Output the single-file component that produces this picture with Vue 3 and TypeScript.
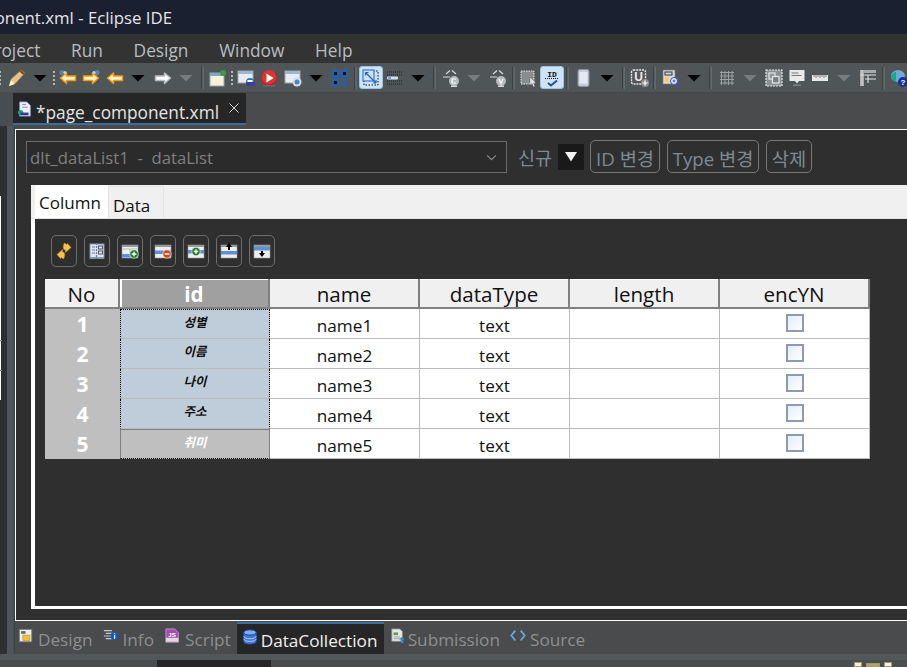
<script setup lang="ts">
interface TbItem { k: string; x: number }

const arrow = (d: string, fill: string, stroke: string) =>
  `<path d="${d}" fill="${fill}" stroke="${stroke}" stroke-width="1.5" stroke-linejoin="round"/>`
const LEFT = 'M1.5 9 7.5 4V7H16.5V11.5H7.5V14.5Z'
const RIGHT = 'M16.5 9 10.5 4V7H1.5V11.5H10.5V14.5Z'
const win = '<rect x="1" y="2" width="15" height="12" fill="#e8edf2" stroke="#9aa6b0"/><rect x="1" y="2" width="15" height="3" fill="#9fb6cf"/>'
const tableBase = '<rect x="1" y="3" width="16" height="13" fill="#eee" stroke="#999" stroke-width=".6"/><rect x="1" y="3" width="16" height="2" fill="#999"/>'

const icons: Record<string, string> = {
  dd: '<path d="M2.5 6H15.5L9 12.5Z" fill="#000"/>',
  ddoff: '<path d="M2.5 6H15.5L9 12.5Z" fill="#777c7e"/>',
  grip: '<path d="M9 2v14" stroke="#b5b8ba" stroke-width="2" stroke-dasharray="2 2"/>',
  sep: '<path d="M9 -2v22" stroke="#2b2e30" stroke-width="1"/><path d="M10 -2v22" stroke="#7a7f81" stroke-width="1"/>',
  pencil: '<path d="M1 17 3 10 13 1 17 4 8 14Z" fill="#e4c48c" stroke="#8a6a3c" stroke-width=".7"/><path d="M1 17 3 11 7 15Z" fill="#fff6c8"/><path d="M12 2 16 5" stroke="#6c4a20" stroke-width="2"/>',
  navb: arrow(LEFT, '#fff1c0', '#eb9a12') + '<circle cx="3" cy="3.5" r="2.6" fill="#5d7fb0"/><circle cx="6" cy="3.5" r="1.6" fill="#c5d3e4"/>',
  navf: arrow(RIGHT, '#fff1c0', '#eb9a12') + '<circle cx="15" cy="3.5" r="2.6" fill="#5d7fb0"/><circle cx="12" cy="3.5" r="1.6" fill="#c5d3e4"/>',
  back: arrow(LEFT, '#fff1c0', '#eb9a12'),
  fwd: arrow(RIGHT, '#fff', '#b9bcbe'),
  newwin: '<rect x="1" y="4" width="14" height="13" fill="#f7f2dc" stroke="#9aa6b0"/><rect x="1" y="4" width="14" height="3" fill="#7fa6cc"/><circle cx="14" cy="4" r="3" fill="#3f9a3c"/>',
  winc: win + '<circle cx="13" cy="13" r="4" fill="#2e73b8"/><rect x="9" y="13" width="9" height="4" fill="#3c3f9e"/><rect x="10.5" y="11" width="5" height="2" fill="#fff"/>',
  play: '<circle cx="9" cy="9" r="8" fill="#cc1f1f"/><circle cx="9" cy="8" r="7" fill="#d93636"/><path d="M6.5 4.5 13.5 9 6.5 13.5Z" fill="#fff"/><rect x="3" y="16" width="12" height="1.5" fill="#676a6c"/>',
  winw: win + '<circle cx="13" cy="13" r="4.5" fill="#d7dde5"/><circle cx="13" cy="13" r="2.5" fill="#4d86c5"/>',
  blugrid: '<g fill="none" stroke="#1b63c4" stroke-width="1.6"><rect x="1.5" y="1.5" width="6" height="6"/><rect x="10.5" y="1.5" width="6" height="6"/><rect x="1.5" y="10.5" width="6" height="6"/></g><rect x="3" y="3" width="3" height="3" fill="#111"/><rect x="12" y="3" width="3" height="3" fill="#111"/><rect x="3" y="12" width="3" height="3" fill="#111"/><path d="M10.5 11h6M10.5 16h6M12 13.5h3" stroke="#1b63c4" stroke-width="1.6"/>',
  sized: '<rect x="2" y="2" width="14" height="14" fill="none" stroke="#111" stroke-dasharray="1.5 1.5"/><rect x="1" y="1" width="11" height="11" fill="#cfe2f5" stroke="#1b63c4"/><path d="M3.5 3.5 14 14M3.5 3.5h3M3.5 3.5v3M14 14h-3M14 14v-3" stroke="#1b63c4" stroke-width="1.2" fill="none"/>',
  dots: '<path d="M1 3h16M1 15h16M1 6h16M1 12h16" stroke="#1d1f20" stroke-dasharray="1 1"/><rect x="1" y="7.5" width="11" height="3" rx="1" fill="#cfe2f5"/><rect x="2" y="8.5" width="3" height="1" fill="#1b63c4"/>',
  tagc: '<path d="M4 5 8 1.5M10 1.5 14 5M1 8h7" stroke="#d6d8d9" stroke-width="1.2" fill="none"/><circle cx="12" cy="12" r="5" fill="#b8bbbc"/><path d="M10 10h4M10 14h4M10 10v4" stroke="#fff" stroke-width="1.2"/><rect x="9" y="16.5" width="6" height="1.5" fill="#d6d8d9"/>',
  tagv: '<path d="M4 5 8 1.5M10 1.5 14 5M1 8h7" stroke="#d6d8d9" stroke-width="1.2" fill="none"/><circle cx="12" cy="12" r="5" fill="#b8bbbc"/><path d="M10 10 12 14.5 14 10" stroke="#fff" stroke-width="1.2" fill="none"/><rect x="9" y="16.5" width="6" height="1.5" fill="#d6d8d9"/>',
  selc: '<rect x="1" y="2" width="13" height="13" fill="#8a8d8f" stroke="#e8e8e8" stroke-dasharray="1.5 1"/><path d="M10 8 16 14 13.5 14 15 17.5 13.5 18 12 14.5 10 16Z" fill="#dfe3e6" stroke="#555" stroke-width=".4"/>',
  idc: '<text x="9" y="7.5" font-family="Liberation Mono" font-size="8" font-weight="700" text-anchor="middle" fill="#111">ID</text><path d="M2 9.5h14" stroke="#111" stroke-dasharray="1 1"/><path d="M5 14 8 16.5 14 11.5" fill="none" stroke="#1f4f96" stroke-width="2"/>',
  phone: '<rect x="3" y="0.5" width="11" height="17" rx="2" fill="#c9ccd3" stroke="#8e90a8"/><rect x="4.5" y="3" width="8" height="11.5" fill="#e6e8f2"/>',
  uplus: '<rect x="0.5" y="1" width="14" height="14" rx="2" fill="#555" stroke="#e5e5e5" stroke-width="1.4" stroke-dasharray="2 .8"/><text x="7.5" y="12" font-family="Liberation Sans" font-size="12" font-weight="700" text-anchor="middle" fill="#eee">U</text><circle cx="14" cy="14" r="4" fill="#8c8f91"/><path d="M11.5 14h5M14 11.5v5" stroke="#fff" stroke-width="1.2"/>',
  frames: '<rect x="1" y="1" width="12" height="14" fill="#d9d9d9" stroke="#777" stroke-width=".6"/><rect x="3" y="3" width="7" height="3" fill="none" stroke="#333"/><rect x="3" y="8" width="4" height="5" fill="#f2cc64"/><circle cx="12" cy="12" r="3.5" fill="#eaf0fb" stroke="#3752c4"/><path d="M14.5 14.5 17.5 17.5" stroke="#3752c4" stroke-width="1.6"/><path d="M10.5 12h3M12 10.5v3" stroke="#3752c4"/>',
  hash: '<path d="M2 3.5h14M2 7h14M2 10.5h14M2 14h14M3.5 2v14M7 2v14M10.5 2v14M14 2v14" stroke="#9ea1a3"/>',
  overlap: '<rect x="1" y="1" width="16" height="16" fill="#8e9193" stroke="#e6e6e6" stroke-width="1.2" stroke-dasharray="2 1"/><rect x="4" y="4" width="6" height="6" fill="none" stroke="#e6e6e6" stroke-width="1.2"/><rect x="7.5" y="7.5" width="6.5" height="6.5" fill="#7b7e80" stroke="#e6e6e6" stroke-width="1.2"/>',
  note: '<rect x="1.5" y="1" width="15" height="11" fill="#e9eaea"/><path d="M3.5 4h7M3.5 6.5h10" stroke="#777"/><path d="M7 12h4L9 14.5Z" fill="#e9eaea"/><rect x="5" y="15.5" width="8" height="1.5" fill="#7d8183"/>',
  ruler: '<rect x="1" y="6" width="16" height="6" fill="#e8e8e8"/><path d="M3 6v2M5 6v3M7 6v2M9 6v3M11 6v2M13 6v3M15 6v2" stroke="#666" stroke-width=".8"/>',
  guides: '<path d="M3 1v16M1 6h16M9 6v8M6 10h11" stroke="#e3e3e3" stroke-width="1.1"/><path d="M1 1h16v3H1zM1 1h4v16H1z" fill="#cfcfcf" opacity=".7"/>',
  help: '<ellipse cx="8" cy="7" rx="7" ry="6" fill="#6ea9d8"/><path d="M1 10C1 5 4 3 6 3V13Z" fill="#1ba88c"/><circle cx="13" cy="13" r="5" fill="#1a2f9a"/><text x="13" y="16" font-family="Liberation Sans" font-size="8" font-weight="700" text-anchor="middle" fill="#fff">?</text>',
  file: '<path d="M3 1H11L15 5V17H3Z" fill="#eef2fb" stroke="#8d95c4"/><circle cx="4" cy="13" r="3" fill="#15a07c"/><rect x="4" y="13" width="9" height="3" fill="#2d3b9b"/><path d="M6 4h4M6 7h6" stroke="#6f7bc0"/>',
  sync: '<path d="M2 12.5 7.5 7.5V10C10 10 10.5 13.5 8.5 17L6.5 15.5 5.5 16.5Z" fill="#f6c24a" stroke="#c98b12" stroke-width=".6"/><path d="M16 5.5 10.5 10.5V8C8 8 7.5 4.5 9.5 1L11.5 2.5 12.5 1.5Z" fill="#f6c24a" stroke="#c98b12" stroke-width=".6"/>',
  book: '<rect x="2" y="2" width="14" height="14" fill="#dfe6f2" stroke="#7f95b8"/><rect x="2" y="15" width="14" height="2" fill="#8794aa"/><path d="M8.5 1v16" stroke="#5c7aa8" stroke-width="1.2" stroke-dasharray="2 1"/><path d="M4 5h3M4 8h3M4 11h3" stroke="#6a7f9e"/><rect x="10.5" y="4" width="4" height="3" fill="none" stroke="#555"/><rect x="10.5" y="9" width="4" height="3" fill="none" stroke="#555"/>',
  tadd: tableBase + '<rect x="1" y="12" width="16" height="3.5" fill="#5b8fd8"/><path d="M1 7h16M9 7v5" stroke="#bbb"/><circle cx="13" cy="12" r="4.2" fill="#1f7a28" stroke="#fff" stroke-width=".6"/><path d="M10.7 12h4.6M13 9.7v4.6" stroke="#fff" stroke-width="1.4"/>',
  trem: tableBase + '<rect x="1" y="8.5" width="16" height="3.5" fill="#5b8fd8"/><circle cx="13" cy="12" r="4.2" fill="#d8481c" stroke="#fff" stroke-width=".6"/><path d="M10.7 12h4.6" stroke="#fff" stroke-width="1.6"/>',
  tins: tableBase + '<rect x="1" y="8" width="16" height="3.5" fill="#5b8fd8"/><circle cx="9" cy="9.5" r="4.2" fill="#1f7a28" stroke="#fff" stroke-width=".6"/><path d="M6.7 9.5h4.6M9 7.2v4.6" stroke="#fff" stroke-width="1.4"/>',
  tup: tableBase + '<rect x="1" y="9" width="16" height="3.5" fill="#5b8fd8"/><path d="M9 1 12 5H10V8H8V5H6Z" fill="#000"/>',
  tdown: tableBase + '<rect x="1" y="5" width="16" height="3.5" fill="#5b8fd8"/><path d="M9 15 12 11H10V9H8V11H6Z" fill="#000"/>',
  design: '<rect x="1.5" y="1.5" width="14" height="14" fill="#eee" stroke="#777"/><rect x="3.5" y="3.5" width="5" height="3" fill="#666"/><rect x="5.5" y="8" width="8" height="6" fill="#f2c230" stroke="#a88418" stroke-width=".6"/>',
  info: '<path d="M1 3h9M3 6h8M1 9h9M3 12h8" stroke="#c9c9c9" stroke-width="1.4"/><circle cx="13" cy="9" r="4.5" fill="#1555c0"/><path d="M13 8v4M13 6v1" stroke="#fff" stroke-width="1.4"/>',
  script: '<path d="M1 1H11L15 5V16H1Z" fill="#a84bb0" stroke="#e7d7ea" stroke-width=".6"/><rect x="1" y="11" width="14" height="4.5" fill="#dcdcdc"/><text x="8" y="10" font-family="Liberation Sans" font-size="7" font-weight="700" text-anchor="middle" fill="#fff">JS</text>',
  db: '<ellipse cx="9" cy="4" rx="7" ry="3" fill="#7faee8" stroke="#1f4fb0"/><path d="M2 4V14C2 18 16 18 16 14V4C16 8 2 8 2 4Z" fill="#3f78d8" stroke="#1f4fb0"/><path d="M2 8C2 12 16 12 16 8M2 11C2 15 16 15 16 11" fill="none" stroke="#bcd6f5"/>',
  sub: '<path d="M2 1H11L14 4V15H2Z" fill="#e6e6e6" stroke="#8a8a8a"/><rect x="4" y="5" width="5" height="3" fill="#5a9a5a"/><path d="M4 10h7M4 12h7" stroke="#999"/><path d="M13 10 17 13H15V17H12V13H10Z" fill="#2b90c8"/>',
  source: '<path d="M6 3 1.5 8.5 6 14M12 3 16.5 8.5 12 14" fill="none" stroke="#6aa6ea" stroke-width="2"/>',
}

const xs: Array<[string, number]> = [
  ['grip', 0], ['pencil', 17], ['dd', 40], ['grip', 54], ['navb', 68], ['navf', 91], ['back', 115], ['dd', 138],
  ['fwd', 163], ['ddoff', 186], ['sep', 202], ['newwin', 218], ['grip', 232], ['winc', 246], ['play', 269],
  ['winw', 293], ['dd', 316], ['blugrid', 340], ['sep', 355], ['sized', 371], ['dots', 395], ['dd', 418],
  ['sep', 434], ['tagc', 451], ['ddoff', 474], ['tagv', 498], ['sep', 513], ['selc', 529], ['idc', 552],
  ['sep', 567], ['phone', 584], ['dd', 607], ['sep', 623], ['uplus', 640], ['sep', 654], ['frames', 671],
  ['dd', 694], ['sep', 710], ['hash', 727], ['ddoff', 750], ['overlap', 774], ['note', 797], ['ruler', 820],
  ['ddoff', 844], ['guides', 868], ['sep', 883], ['help', 899],
]
const toolbar: TbItem[] = xs.map(([k, x]) => ({ k, x }))
const gapBefore = (i: number) => (i === 0 ? toolbar[0].x - 9 : toolbar[i].x - toolbar[i - 1].x - 18)

const tools = ['sync', 'book', 'tadd', 'trem', 'tins', 'tup', 'tdown']
const headers = ['No', 'id', 'name', 'dataType', 'length', 'encYN']
const rows = [
  { no: 1, id: '성별', name: 'name1' },
  { no: 2, id: '이름', name: 'name2' },
  { no: 3, id: '나이', name: 'name3' },
  { no: 4, id: '주소', name: 'name4' },
  { no: 5, id: '취미', name: 'name5' },
]
const pages = [
  { k: 'design', t: 'Design' },
  { k: 'info', t: 'Info' },
  { k: 'script', t: 'Script' },
  { k: 'db', t: 'DataCollection', on: true },
  { k: 'sub', t: 'Submission' },
  { k: 'source', t: 'Source' },
]
</script>

<template>
  <div class="app">
    <header class="title"><div class="title-clip"><span>page_component.xml - Eclipse IDE</span></div></header>
    <nav class="menu">
      <span class="m-project">Project</span><span>Run</span><span>Design</span><span>Window</span><span>Help</span>
    </nav>
    <div class="toolbar">
      <span
        v-for="(it, i) in toolbar"
        :key="i"
        class="tb"
        :class="{ active: it.k === 'sized' || it.k === 'idc' }"
        :style="{ marginLeft: gapBefore(i) + 'px' }"
      ><svg viewBox="0 0 18 18" width="18" height="18" v-html="icons[it.k]"></svg></span>
    </div>

    <div class="work">
      <aside class="rail">
        <div class="rail-top"></div>
        <div class="rail-body">
          <div class="rail-dark"><div class="rail-view"><i></i><i></i></div></div>
          <div class="rail-stripe"></div>
        </div>
      </aside>

      <main class="center">
        <div class="ed-tabs">
          <div class="ed-tab">
            <svg viewBox="0 0 18 18" width="16" height="16" v-html="icons.file"></svg>
            <span class="ed-name">*page_component.xml</span>
            <svg class="close" viewBox="0 0 10 10" width="10" height="10"><path d="M.5.5l9 9M9.5.5l-9 9" stroke="#d8d8d8" fill="none"/></svg>
          </div>
        </div>

        <section class="editor">
          <div class="topline">
            <div class="combo">
              <span class="combo-text">dlt_dataList1&nbsp; - &nbsp;dataList</span>
              <svg viewBox="0 0 10 6" width="11" height="7"><path d="M1 1l4 4 4-4" fill="none" stroke="#8a8a8a"/></svg>
            </div>
            <span class="new">신규</span>
            <span class="newbox"><svg viewBox="0 0 12 10" width="12" height="10"><path d="M0 0H12L6 9.5Z" fill="#f2f2f2"/></svg></span>
            <button class="btn b-id">ID 변경</button>
            <button class="btn b-type">Type 변경</button>
            <button class="btn b-del">삭제</button>
          </div>

          <div class="frame">
            <div class="subtabs">
              <span class="st on">Column</span><span class="st">Data</span>
            </div>
            <div class="pane">
              <div class="tools">
                <span v-for="t in tools" :key="t" class="tool">
                  <svg viewBox="0 0 18 18" width="18" height="18" v-html="icons[t]"></svg>
                </span>
              </div>
              <div class="grid">
                <div v-for="(h, i) in headers" :key="h" class="hc" :class="{ sel: i === 1 }">{{ h }}</div>
                <template v-for="(r, ri) in rows" :key="r.no">
                  <div class="no">{{ r.no }}</div>
                  <div class="idc" :class="{ first: ri === 0, last: ri === rows.length - 1 }"><span>{{ r.id }}</span></div>
                  <div class="c">{{ r.name }}</div>
                  <div class="c">text</div>
                  <div class="c"></div>
                  <div class="c chk-cell"><span class="chk"></span></div>
                </template>
              </div>
            </div>
          </div>
        </section>

        <div class="pages">
          <span v-for="p in pages" :key="p.t" class="pg" :class="[p.k, { on: p.on }]">
            <svg viewBox="0 0 18 18" width="16" height="16" v-html="icons[p.k]"></svg>
            <span>{{ p.t }}</span>
          </span>
        </div>
      </main>
    </div>

    <footer class="status">
      <div class="status-a"></div>
      <div class="status-b">
        <span class="sb-dark"></span>
        <span class="sb-right"><i></i><i class="wide"></i><i></i></span>
      </div>
    </footer>
  </div>
</template>

<style>
html, body { margin: 0; padding: 0; background: #333; }
</style>

<style scoped>
.app {
  width: 907px; height: 667px; overflow: hidden; display: flex; flex-direction: column;
  font-family: "Open Sans", "Noto Sans CJK KR", sans-serif; background: #4a4b4d;
}
.title { height: 34px; flex: none; background: #1a2030; color: #e6e6e6; font-size: 16.8px; line-height: 35px; }
.title-clip { width: 172px; display: flex; justify-content: flex-end; overflow: hidden; white-space: nowrap; }
.title-clip span { flex: none; }
.menu {
  height: 29px; flex: none; background: #333; color: #b9bdc2; font-size: 17.3px; line-height: 33px;
  display: flex; white-space: nowrap; overflow: hidden;
}
.menu span { margin-left: 30.7px; flex: none; }
.menu .m-project { margin-left: -16px; }
.toolbar {
  height: 29px; flex: none; background: #505557; display: flex; align-items: center; overflow: hidden;
}
.tb { flex: none; width: 18px; height: 18px; position: relative; display: block; }
.tb svg { display: block; position: relative; overflow: visible; }
.tb.active::before {
  content: ""; position: absolute; left: -3px; top: -3px; width: 22px; height: 21px;
  background: #cde4f8; border: 1px solid #9cc4e8; border-radius: 3px;
}
.work { flex: 1; min-height: 0; display: flex; }
.rail { width: 15px; flex: none; display: flex; flex-direction: column; }
.rail-top { height: 34px; background: #4a4d4f; flex: none; }
.rail-body { flex: 1; display: flex; }
.rail-dark { width: 7px; background: #2f2f2f; padding-top: 70px; }
.rail-view { width: 1px; height: 204px; background: #fff; position: relative; }
.rail-view i { position: absolute; left: 0; width: 2px; height: 1px; background: #888; }
.rail-view i:first-child { top: 144px; }
.rail-view i:last-child { top: 174px; }
.rail-stripe { flex: 1; background: linear-gradient(90deg, #505659 0, #505659 75%, #383a3b 100%); }
.center { flex: 1; min-width: 0; display: flex; flex-direction: column; }
.ed-tabs { height: 37px; flex: none; background: #4a4b4d; border-top: 1px solid #45484a; box-sizing: border-box; }
.ed-tab {
  margin-left: -2px; width: 233px; height: 32px; box-sizing: border-box; background: #262626;
  border-bottom: 2px solid #3b6d9a; display: flex; align-items: center; padding: 8px 0 0 4px; color: #e4e4e4;
}
.ed-tab > svg:first-child { margin-top: -7px; }
.ed-name { font-size: 17.3px; margin-left: 3px; white-space: nowrap; }
.close { margin-left: 10px; margin-top: -8px; }
.editor {
  flex: 1; min-height: 0; background: #2f2f2f; border: 1px solid #fff; border-right: 0;
  padding: 10px 0 11px 10px; display: flex; flex-direction: column; margin-bottom: 1px;
}
.topline { height: 33px; flex: none; display: flex; align-items: center; }
.combo {
  width: 481px; height: 32px; box-sizing: border-box; border: 1px solid #6b6b6b; display: flex; align-items: center;
  justify-content: space-between; padding: 1px 9px 0 3px; background: #2b2b2b; color: #808080; font-size: 16.7px;
}
.combo-text { white-space: pre; }
.new { margin-left: 11px; color: #7d8a96; font-size: 18.5px; }
.newbox { margin-left: 6px; width: 26px; height: 26px; background: #191919; display: flex; align-items: center; justify-content: center; }
.btn {
  margin: 0 0 0 6px; height: 33px; box-sizing: border-box; padding: 1px 0 0; background: transparent; color: #7e8a94;
  border: 1px solid #777; border-radius: 5px; font: inherit; font-size: 18.7px; white-space: nowrap; flex: none;
}
.b-id { width: 70px; }
.b-type { width: 92px; margin-left: 7px; }
.b-del { width: 46px; margin-left: 7px; }
.frame {
  flex: 1; min-height: 0; margin: 12px -5px 0 5px; border-left: 4px solid #fff; border-bottom: 3px solid #fff;
  display: flex; flex-direction: column;
}
.subtabs {
  height: 34px; flex: none; box-sizing: border-box; background: #f0f0f0; margin-left: -4px; padding-left: 4px;
  border-bottom: 1px solid #e4e4e4; display: flex; align-items: stretch; font-size: 17px; color: #111;
}
.st { padding: 7px 0 0 4px; border: 1px solid #e4e4e4; border-bottom: 0; margin-top: 1px; width: 56px; box-sizing: border-box; }
.st.on { background: #fff; width: 73px; margin-top: 0; border-color: #fff; padding-top: 5px; padding-left: 3px; }
.pane { flex: 1; min-height: 0; padding: 16px 0 0 10px; }
.tools { display: flex; padding-left: 6px; gap: 7px; height: 33px; }
.tool {
  width: 26px; height: 32px; box-sizing: border-box; border: 1px solid #6e6e6e; border-radius: 5px;
  display: flex; align-items: center; justify-content: center;
}
.grid {
  margin-top: 11px; display: grid; width: 825px;
  grid-template-columns: 75px repeat(5, 150px); grid-auto-rows: 30px; background: #fff;
}
.hc {
  background: #f0f0f0; border-bottom: 2px solid #808080; border-right: 2px solid #808080; box-sizing: border-box;
  text-align: center; font-size: 20.6px; line-height: 30px; color: #111; box-shadow: inset 0 1px 0 #fff;
}
.hc.sel { background: #a0a0a0; color: #fff; font-weight: 700; box-shadow: inset 2px 1px 0 #fff; }
.no {
  background: #bfbfbf; color: #fff; font-weight: 700; font-size: 21px; text-align: center; line-height: 30px;
}
.idc {
  background: #bfcddb; box-sizing: border-box; border: 1px dotted #000; border-width: 0 1px; border-bottom: 1px solid #bbb;
  display: flex; align-items: center; justify-content: center; font-size: 12.5px; font-weight: 700; font-style: italic; color: #111;
}
.idc span { margin-top: -6px; }
.idc.first { border-top: 1px dotted #000; }
.idc.last { background: #bfbfbf; color: #fff; border: 1px solid #808080; border-bottom: 1px dotted #000; }
.c {
  background: #fff; box-sizing: border-box; border-right: 1px solid #bbb; border-bottom: 1px solid #bbb;
  text-align: center; font-size: 17.2px; line-height: 33px; color: #111;
}
.chk-cell { display: flex; justify-content: center; padding-top: 5px; }
.chk {
  width: 18px; height: 18px; box-sizing: border-box; border: 2px solid #8c9bb0;
  background: linear-gradient(135deg, #e2eefb, #fff);
}
.pages {
  height: 32px; flex: none; background: #494b4d; display: flex; color: #8f8f8f; font-size: 17.2px; white-space: nowrap;
}
.pg { display: flex; align-items: center; flex: none; padding-top: 2px; box-sizing: border-box; }
.pg svg { margin-top: -6px; margin-right: 4px; flex: none; }
.pg.design { margin-left: 3px; }
.pg.info { margin-left: 10px; }
.pg.script { margin-left: 11px; }
.pg.db {
  margin-left: 6px; width: 147px; padding-left: 5px; background: #262626; color: #f0f0f0; border-top: 2px solid #3b6d9a;
}
.pg.db svg { margin-right: 3px; }
.pg.sub { margin-left: 6px; }
.pg.sub svg { margin-right: 2px; }
.pg.source { margin-left: 10px; }
.status { height: 13px; flex: none; display: flex; flex-direction: column; }
.status-a { height: 6px; flex: none; background: #50585a; }
.status-b { flex: 1; background: #484c4e; display: flex; }
.sb-dark { margin-left: 157px; width: 114px; background: #262626; }
.sb-right { margin-left: auto; width: 57px; background: #4a4f51; padding: 2px 0 0 4px; display: flex; gap: 4px; box-sizing: border-box; }
.sb-right i { width: 8px; background: #f2f0e0; border: 1px solid #a99a5c; box-sizing: border-box; }
.sb-right .wide { width: 14px; background: #b0a468; margin-top: 1px; }
</style>
